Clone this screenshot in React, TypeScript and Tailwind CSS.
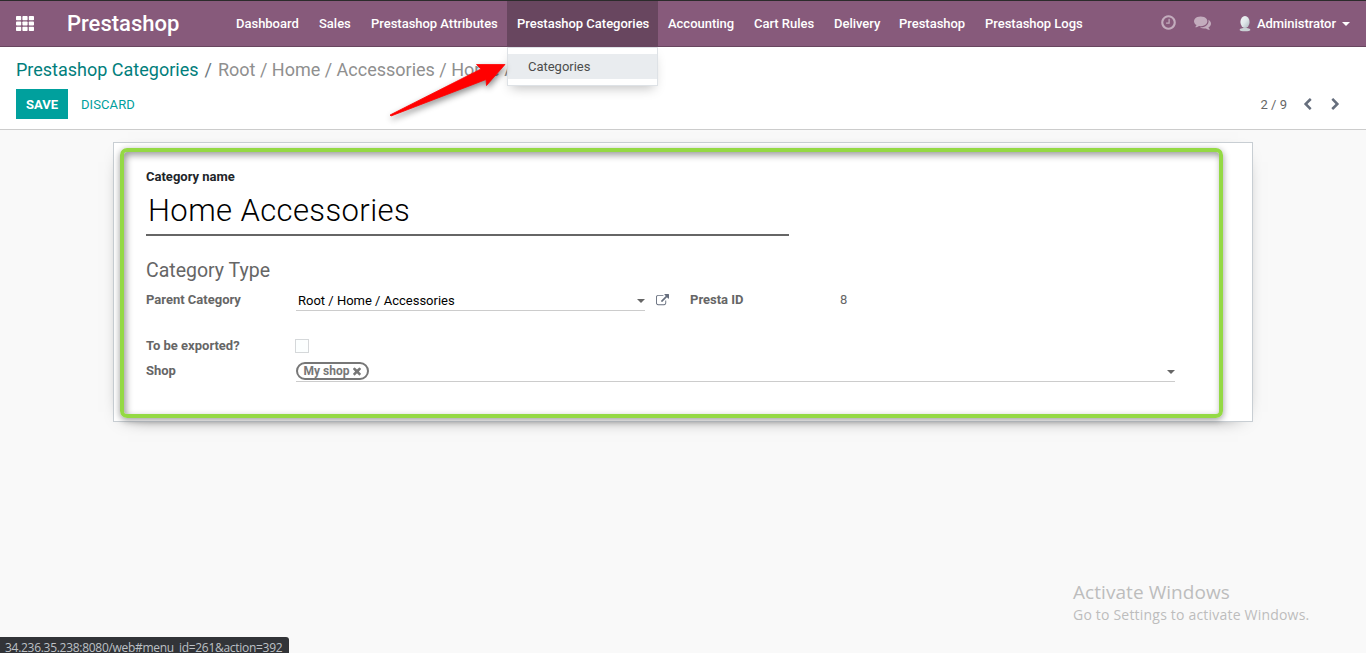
import React from "react";

const clockPath =
  "M1024 544v448q0 14-9 23t-23 9h-320q-14 0-23-9t-9-23v-64q0-14 9-23t23-9h224v-352q0-14 9-23t23-9h64q14 0 23 9t9 23zm416 352q0-148-73-273t-198-198-273-73-273 73-198 198-73 273 73 273 198 198 273 73 273-73 198-198 73-273zm224 0q0 209-103 385.5t-279.5 279.5-385.5 103-385.5-103-279.5-279.5-103-385.5 103-385.5 279.5-279.5 385.5-103 385.5 103 279.5 279.5 103 385.5z";
const commentsPath =
  "M1408 768q0 139-94 257t-256.5 186.5-353.5 68.5q-86 0-176-16-124 88-278 128-36 9-86 16h-3q-11 0-20.5-8t-11.5-21q-1-3-1-6.5t.5-6.5 2-6l2.5-5 3.5-5.5 4-5 4.500-5 4-4.500q5-6 23-25t26-29.500 22.500-29 25-38.500 20.500-44q-124-72-195-177t-71-224q0-139 94-257t256.500-186.500 353.500-68.500 353.500 68.500 256.500 186.500 94 257zm384 256q0 120-71 224.500t-195 176.500q10 24 20.500 44t25 38.500 22.500 29 26 29.500 23 25q1 1 4 4.500t4.500 5 4 5 3.500 5.500l2.500 5 2 6 .5 6.500-1 6.500q-3 14-13 22t-22 7q-50-7-86-16-154-40-278-128-90 16-176 16-271 0-472-132 58 4 88 4 161 0 309-45t264-129q125-92 192-212t67-254q0-77-23-152 129 71 204 178t75 230z";
const externalPath =
  "M1408 928v320q0 119-84.5 203.5t-203.5 84.5h-832q-119 0-203.5-84.5t-84.5-203.5v-832q0-119 84.5-203.5t203.5-84.5h704q14 0 23 9t9 23v64q0 14-9 23t-23 9h-704q-66 0-113 47t-47 113v832q0 66 47 113t113 47h832q66 0 113-47t47-113v-320q0-14 9-23t23-9h64q14 0 23 9t9 23zm384-864v512q0 26-19 45t-45 19-45-19l-176-176-652 652q-10 10-23 10t-23-10l-114-114q-10-10-10-23t10-23l652-652-176-176q-19-19-19-45t19-45 45-19h512q26 0 45 19t19 45z";
const chevronPath =
  "M1427 301l-531 531 531 531q19 19 19 45t-19 45l-166 166q-19 19-45 19t-45-19l-742-742q-19-19-19-45t19-45l742-742q19-19 45-19t45 19l166 166q19 19 19 45t-19 45z";
const timesPath =
  "M1490 1322q0 40-28 68l-136 136q-28 28-68 28t-68-28l-294-294-294 294q-28 28-68 28t-68-28l-136-136q-28-28-28-68t28-68l294-294-294-294q-28-28-28-68t28-68l136-136q28-28 68-28t68 28l294 294 294-294q28-28 68-28t68 28l136 136q28 28 28 68t-28 68l-294 294 294 294q28 28 28 68z";

function Icon({ d, className }: { d: string; className: string }) {
  return (
    <svg viewBox="0 0 1792 1792" fill="currentColor" className={className}>
      <path d={d} />
    </svg>
  );
}

function Caret({ className }: { className: string }) {
  return (
    <svg viewBox="0 0 8 4" fill="currentColor" className={className}>
      <path d="M0 0h8L4 4z" />
    </svg>
  );
}

function AppsIcon() {
  return (
    <svg viewBox="0 0 18 15" fill="#fff" className="mb-[2px] h-[15px] w-[18px] shrink-0">
      {[0, 5.4, 10.8].map((y) =>
        [0, 6.4, 12.8].map((x) => (
          <rect key={`${x}-${y}`} x={x} y={y} width="5.2" height="4.2" rx="0.8" />
        )),
      )}
    </svg>
  );
}

function Avatar() {
  return (
    <svg viewBox="0 0 12 16" className="h-4 w-3 shrink-0">
      <defs>
        <linearGradient id="head" x1="0" y1="0" x2="1" y2="1">
          <stop offset="0" stopColor="#f4f7f8" />
          <stop offset="0.5" stopColor="#dfe6e9" />
          <stop offset="1" stopColor="#a9b5bb" />
        </linearGradient>
      </defs>
      <path d="M0.6 13.900c0-1.400 2.600-1.600 3.800-2.200h3.200c1.200.6 3.800.8 3.800 2.200 0 .9-2.400 1.400-5.400 1.400s-5.400-.5-5.400-1.400z" fill="#c9d0d4" />
      <ellipse cx="6" cy="6" rx="4.6" ry="6" fill="url(#head)" />
    </svg>
  );
}

const items: { label: string; width: string }[] = [
  { label: "Dashboard", width: "w-[83px]" },
  { label: "Sales", width: "w-[52px]" },
  { label: "Prestashop Attributes", width: "w-[146px]" },
  { label: "Prestashop Categories", width: "w-[151px]" },
  { label: "Accounting", width: "w-[86px]" },
  { label: "Cart Rules", width: "w-[80px]" },
  { label: "Delivery", width: "w-[65px]" },
  { label: "Prestashop", width: "w-[86px]" },
  { label: "Prestashop Logs", width: "w-[118px]" },
];

function Navbar() {
  return (
    <header className="flex h-[47px] shrink-0 items-stretch border-t border-t-[#2b2b2b] bg-[#875a7b] text-[13px] font-medium text-white shadow-[inset_0_-1px_0_#68465f]">
      <div className="flex w-[226px] items-center pl-4">
        <AppsIcon />
        <span className="mb-[2px] ml-[33px] text-[22px] whitespace-nowrap">Prestashop</span>
      </div>
      <nav className="flex">
        {items.map(({ label, width }) => {
          const active = label === "Prestashop Categories";
          return (
            <div
              key={label}
              className={`relative flex items-center pl-[10px] tracking-[-0.02px] whitespace-nowrap ${width} ${active ? "bg-[#68465f]" : ""}`}
            >
              {label}
              {active && (
                <div className="absolute top-[46px] left-0 z-10 h-[39px] w-[151px] border border-[#dee2e6] bg-white pt-[6px] text-[13px] font-normal text-[#4c4c4c] shadow-[0_6px_12px_-4px_rgba(0,0,0,0.25)]">
                  <div className="h-[25px] bg-[#e9ecef] pl-5 leading-[25px]">Categories</div>
                </div>
              )}
            </div>
          );
        })}
      </nav>
      <div className="ml-auto flex items-center pr-[16px]">
        <Icon d={clockPath} className="mr-[17px] mb-[3px] size-[17px] text-[#c3acbd]" />
        <Icon d={commentsPath} className="mr-[28px] mb-[3px] size-[17px] text-[#c3acbd]" />
        <Avatar />
        <span className="ml-[6px] tracking-[-0.05px]">Administrator</span>
        <Caret className="ml-[6px] h-1 w-2" />
      </div>
    </header>
  );
}

function Arrow() {
  return (
    <svg
      viewBox="0 0 130 70"
      className="absolute top-[54px] left-[384px] z-20 h-[70px] w-[130px] drop-shadow-[1px_3px_3px_rgba(0,0,0,0.45)]"
    >
      <path d="M6 61L97 15 92.500 10.500 121 10.500 102.500 31.500 102 25.500 7 62z" fill="#ff0000" stroke="#ff0000" strokeWidth="0.8" />
    </svg>
  );
}

function ControlPanel() {
  return (
    <section className="h-[83px] shrink-0 border-b border-[#cccccc] bg-white px-4 pt-[10px]">
      <div className="flex h-[24px] w-[491px] items-center overflow-hidden text-[18px] whitespace-pre text-[#8f8f8f]">
        <span className="text-[#017e7c]">Prestashop Categories</span>
        <span className="px-[6px] text-[#6c757d]">/</span>
        <span>Root / Home / Accessories / Home Accessories</span>
      </div>
      <div className="mt-[8px] flex h-[30px] items-center text-[13px]">
        <button className="h-[30px] w-[52px] bg-[#00a09d] pt-px font-bold text-white">SAVE</button>
        <button className="ml-[13px] pt-px tracking-[0.08px] text-[#00a09d]">DISCARD</button>
        <span className="ml-auto pt-px text-[#666666]">2 / 9</span>
        <Icon d={chevronPath} className="ml-[14px] size-[13px] text-[#666e7d]" />
        <Icon d={chevronPath} className="mr-[8px] mb-px ml-[15px] size-[13px] rotate-180 text-[#666e7d]" />
      </div>
    </section>
  );
}

function Sheet() {
  return (
    <section className="relative mt-3 ml-[113px] h-[280px] w-[1140px] shrink-0 border border-[#c8ced3] bg-white pl-8 text-[13px] text-[#666666] shadow-[0_5px_20px_-15px_#000]">
      <div className="h-[19px] pt-[24px] leading-[19px] font-bold text-[#212529]">Category name</div>
      <div className="mt-[19px] h-[50px] w-[643px] border-b-2 border-[#666666] pl-[2px] text-[31px] leading-[49px] font-light tracking-[0.4px] text-black">
        Home Accessories
      </div>
      <div className="mt-[23px] h-[24px] text-[19.5px] leading-[24px]">Category Type</div>
      <div className="mt-[8px] flex h-[22px] leading-[20px]">
        <div className="w-[150px] font-bold leading-[18px]">Parent Category</div>
        <div className="flex h-[20px] w-[349px] items-center justify-between border-b border-[#cccccc] pl-[2px] text-black">
          <span>Root / Home / Accessories</span>
          <Caret className="mt-[1px] h-1 w-2 text-[#666666]" />
        </div>
        <Icon d={externalPath} className="mt-[3px] ml-[11px] size-[13px] text-[#666e7d]" />
        <div className="ml-[21px] w-[150px] font-bold leading-[18px]">Presta ID</div>
        <div className="leading-[18px]">8</div>
      </div>
      <div className="mt-[22px] flex h-[22px] items-center">
        <div className="w-[149px] pb-[1px] font-bold">To be exported?</div>
        <div className="size-[14px] border border-[#d5d8da] bg-[#fcffff]" />
      </div>
      <div className="mt-[4px] flex h-[21px]">
        <div className="w-[150px] font-bold leading-[20px]">Shop</div>
        <div className="flex w-[879px] items-start justify-between border-b border-[#cccccc]">
          <span className="mt-[1px] flex h-[18px] w-[73px] items-center justify-center rounded-full border-2 border-[#777777] pl-[2px] text-[12px] font-bold text-[#777777]">
            My shop
            <Icon d={timesPath} className="mb-px ml-[2px] size-[12px]" />
          </span>
          <Caret className="mt-[9px] h-1 w-2 text-[#666666]" />
        </div>
      </div>
      <div className="pointer-events-none absolute top-[5px] left-[6px] h-[270px] w-[1103px] rounded-[7px] border-4 border-[#94d944] shadow-[0_2px_7px_rgba(0,0,0,0.4),inset_2px_3px_7px_rgba(0,0,0,0.4)]" />
    </section>
  );
}

export default function App() {
  return (
    <div className="relative flex h-[653px] w-[1366px] flex-col overflow-hidden bg-[#f9f9f9] font-['Roboto',sans-serif]">
      <Navbar />
      <ControlPanel />
      <Sheet />
      <Arrow />
      <div className="absolute top-[580px] left-[1073px] font-['Open_Sans',sans-serif] whitespace-nowrap text-[#bdbdbd]">
        <div className="text-[19px] leading-[25px] tracking-[0.06px]">Activate Windows</div>
        <div className="text-[14px] leading-[20px] tracking-[0.2px]">Go to Settings to activate Windows.</div>
      </div>
      <div className="absolute top-[637px] left-0 h-[20px] w-[289px] rounded-tr-[3px] bg-[#323438] pl-[5px] font-['Open_Sans',sans-serif] text-[12px] leading-[21px] tracking-[-0.29px] whitespace-nowrap text-[#bdc1c6]">
        34.236.35.238:8080/web#menu_id=261&amp;action=392
      </div>
    </div>
  );
}
